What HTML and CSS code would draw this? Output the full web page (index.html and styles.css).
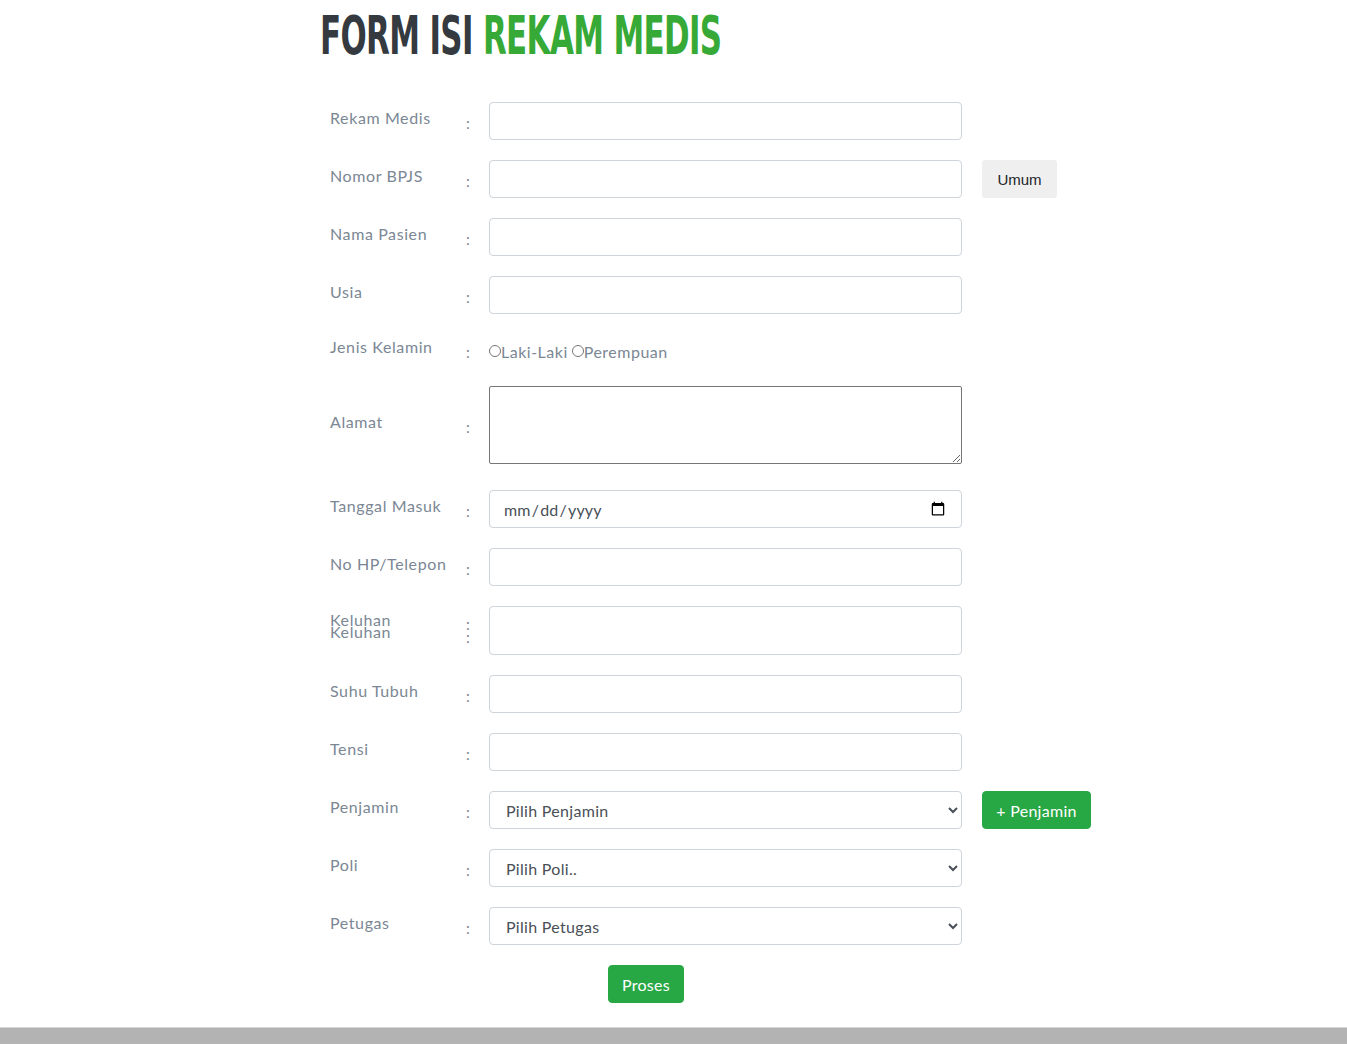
FILE: index.html
```html
<!DOCTYPE html>
<html lang="id">
<head>
<meta charset="utf-8">
<title>Form Isi Rekam Medis</title>
<link rel="stylesheet" href="styles.css">
</head>
<body>
<main class="container">
  <h1 class="title"><span class="title-inner"><span class="dark">FORM ISI</span> <span class="green">REKAM MEDIS</span></span></h1>
  <form class="form">
    <div class="row">
      <label class="label">Rekam Medis</label><span class="colon">:</span>
      <input class="control" type="text">
    </div>
    <div class="row">
      <label class="label">Nomor BPJS</label><span class="colon">:</span>
      <input class="control" type="text">
      <button type="button" class="btn-umum">Umum</button>
    </div>
    <div class="row">
      <label class="label">Nama Pasien</label><span class="colon">:</span>
      <input class="control" type="text">
    </div>
    <div class="row">
      <label class="label">Usia</label><span class="colon">:</span>
      <input class="control" type="text">
    </div>
    <div class="row row-radio">
      <label class="label">Jenis Kelamin</label><span class="colon">:</span>
      <div class="radios">
        <label class="radio"><input type="radio" name="jk">Laki-Laki</label>
        <label class="radio"><input type="radio" name="jk">Perempuan</label>
      </div>
    </div>
    <div class="row row-textarea">
      <label class="label">Alamat</label><span class="colon">:</span>
      <textarea class="textarea"></textarea>
    </div>
    <div class="row">
      <label class="label">Tanggal Masuk</label><span class="colon">:</span>
      <input class="control date" type="date">
    </div>
    <div class="row">
      <label class="label">No HP/Telepon</label><span class="colon">:</span>
      <input class="control" type="text">
    </div>
    <div class="row">
      <div class="label double"><span>Keluhan</span><span>Keluhan</span></div>
      <div class="colon double-colon"><span>:</span><span>:</span></div>
      <input class="control tall" type="text">
    </div>
    <div class="row">
      <label class="label">Suhu Tubuh</label><span class="colon">:</span>
      <input class="control" type="text">
    </div>
    <div class="row">
      <label class="label">Tensi</label><span class="colon">:</span>
      <input class="control" type="text">
    </div>
    <div class="row">
      <label class="label">Penjamin</label><span class="colon">:</span>
      <select class="control select"><option>Pilih Penjamin</option></select>
      <button type="button" class="btn-green btn-side">+ Penjamin</button>
    </div>
    <div class="row">
      <label class="label">Poli</label><span class="colon">:</span>
      <select class="control select"><option>Pilih Poli..</option></select>
    </div>
    <div class="row">
      <label class="label">Petugas</label><span class="colon">:</span>
      <select class="control select"><option>Pilih Petugas</option></select>
    </div>
    <div class="submit-row">
      <button type="submit" class="btn-green">Proses</button>
    </div>
  </form>
</main>
<footer class="footer"></footer>
</body>
</html>
```

FILE: styles.css
```css
html, body {
  margin: 0;
  padding: 0;
  background: #fff;
}
body {
  font-family: Lato, "Noto Sans", sans-serif;
  font-size: 16px;
  color: #495057;
}
.container {
  width: 1027px;
  margin: 0 0 0 320px;
  padding: 0;
}
.title {
  margin: 0;
  padding-top: 8px;
  height: 102px;
  box-sizing: border-box;
  font-family: "DejaVu Sans Condensed", "Liberation Sans Narrow", sans-serif;
  font-weight: 700;
  font-size: 54px;
  line-height: 56px;
  white-space: nowrap;
}
.title-inner {
  display: inline-block;
  transform: scaleX(0.636);
  transform-origin: left center;
  letter-spacing: -1px;
}
.dark { color: #343a40; }
.green { color: #37a936; }
.form {
  display: flex;
  flex-direction: column;
  gap: 20px;
}
.row {
  display: grid;
  grid-template-columns: 136px 23px 473px auto;
  align-items: center;
  padding-left: 10px;
}
.row-radio {
  min-height: 32px;
}
.row-textarea {
  padding-bottom: 6px;
}
.label {
  color: #7b8794;
  font-size: 16px;
  letter-spacing: 0.6px;
  padding-bottom: 7px;
  line-height: 20px;
}
.colon {
  color: #7b8794;
  font-size: 15px;
  padding-top: 4px;
  line-height: 20px;
}
.double {
  display: flex;
  flex-direction: column;
  line-height: 12px;
  padding-bottom: 10px;
}
.double-colon {
  display: flex;
  flex-direction: column;
  line-height: 13px;
  padding-top: 0;
}
.control {
  box-sizing: border-box;
  width: 473px;
  height: 38px;
  border: 1px solid #ced4da;
  border-radius: 4px;
  background: #fff;
  padding: 6px 13px;
  font-family: Lato, "Noto Sans", sans-serif;
  font-size: 16px;
  color: #495057;
  margin: 0;
}
.tall {
  height: 49px;
}
.date {
  letter-spacing: 0.2px;
}
.select {
  padding-left: 12px;
  letter-spacing: 0.3px;
}
.textarea {
  box-sizing: border-box;
  width: 473px;
  height: 78px;
  margin: 0;
  border: 1px solid #767676;
  border-radius: 2px;
}
.radios {
  display: flex;
  gap: 4px;
  padding-top: 2px;
}
.radio {
  display: flex;
  align-items: center;
  color: #7b8794;
  font-size: 16px;
  letter-spacing: 0.5px;
}
.radio input {
  margin: 0;
  width: 12px;
  height: 12px;
}
.btn-umum {
  margin-left: 20px;
  width: 75px;
  height: 38px;
  border: none;
  border-radius: 3px;
  background: #efefef;
  font-family: "Liberation Sans", Arial, sans-serif;
  font-size: 15px;
  color: #212529;
  justify-self: start;
}
.btn-green {
  height: 38px;
  padding: 0 13px;
  border: 1px solid #28a745;
  border-radius: 4px;
  background: #28a745;
  color: #fff;
  font-family: Lato, "Noto Sans", sans-serif;
  font-size: 16px;
  letter-spacing: 0.3px;
}
.btn-side {
  margin-left: 20px;
  justify-self: start;
  width: 109px;
  padding: 0;
}
.submit-row {
  display: flex;
  padding-left: 288px;
}
.submit-row .btn-green {
  width: 76px;
  padding: 0;
}
.footer {
  margin-top: 24px;
  height: 17px;
  background: #b3b3b3;
  border-top: 1px solid #d4d4d4;
  box-sizing: border-box;
}
```
